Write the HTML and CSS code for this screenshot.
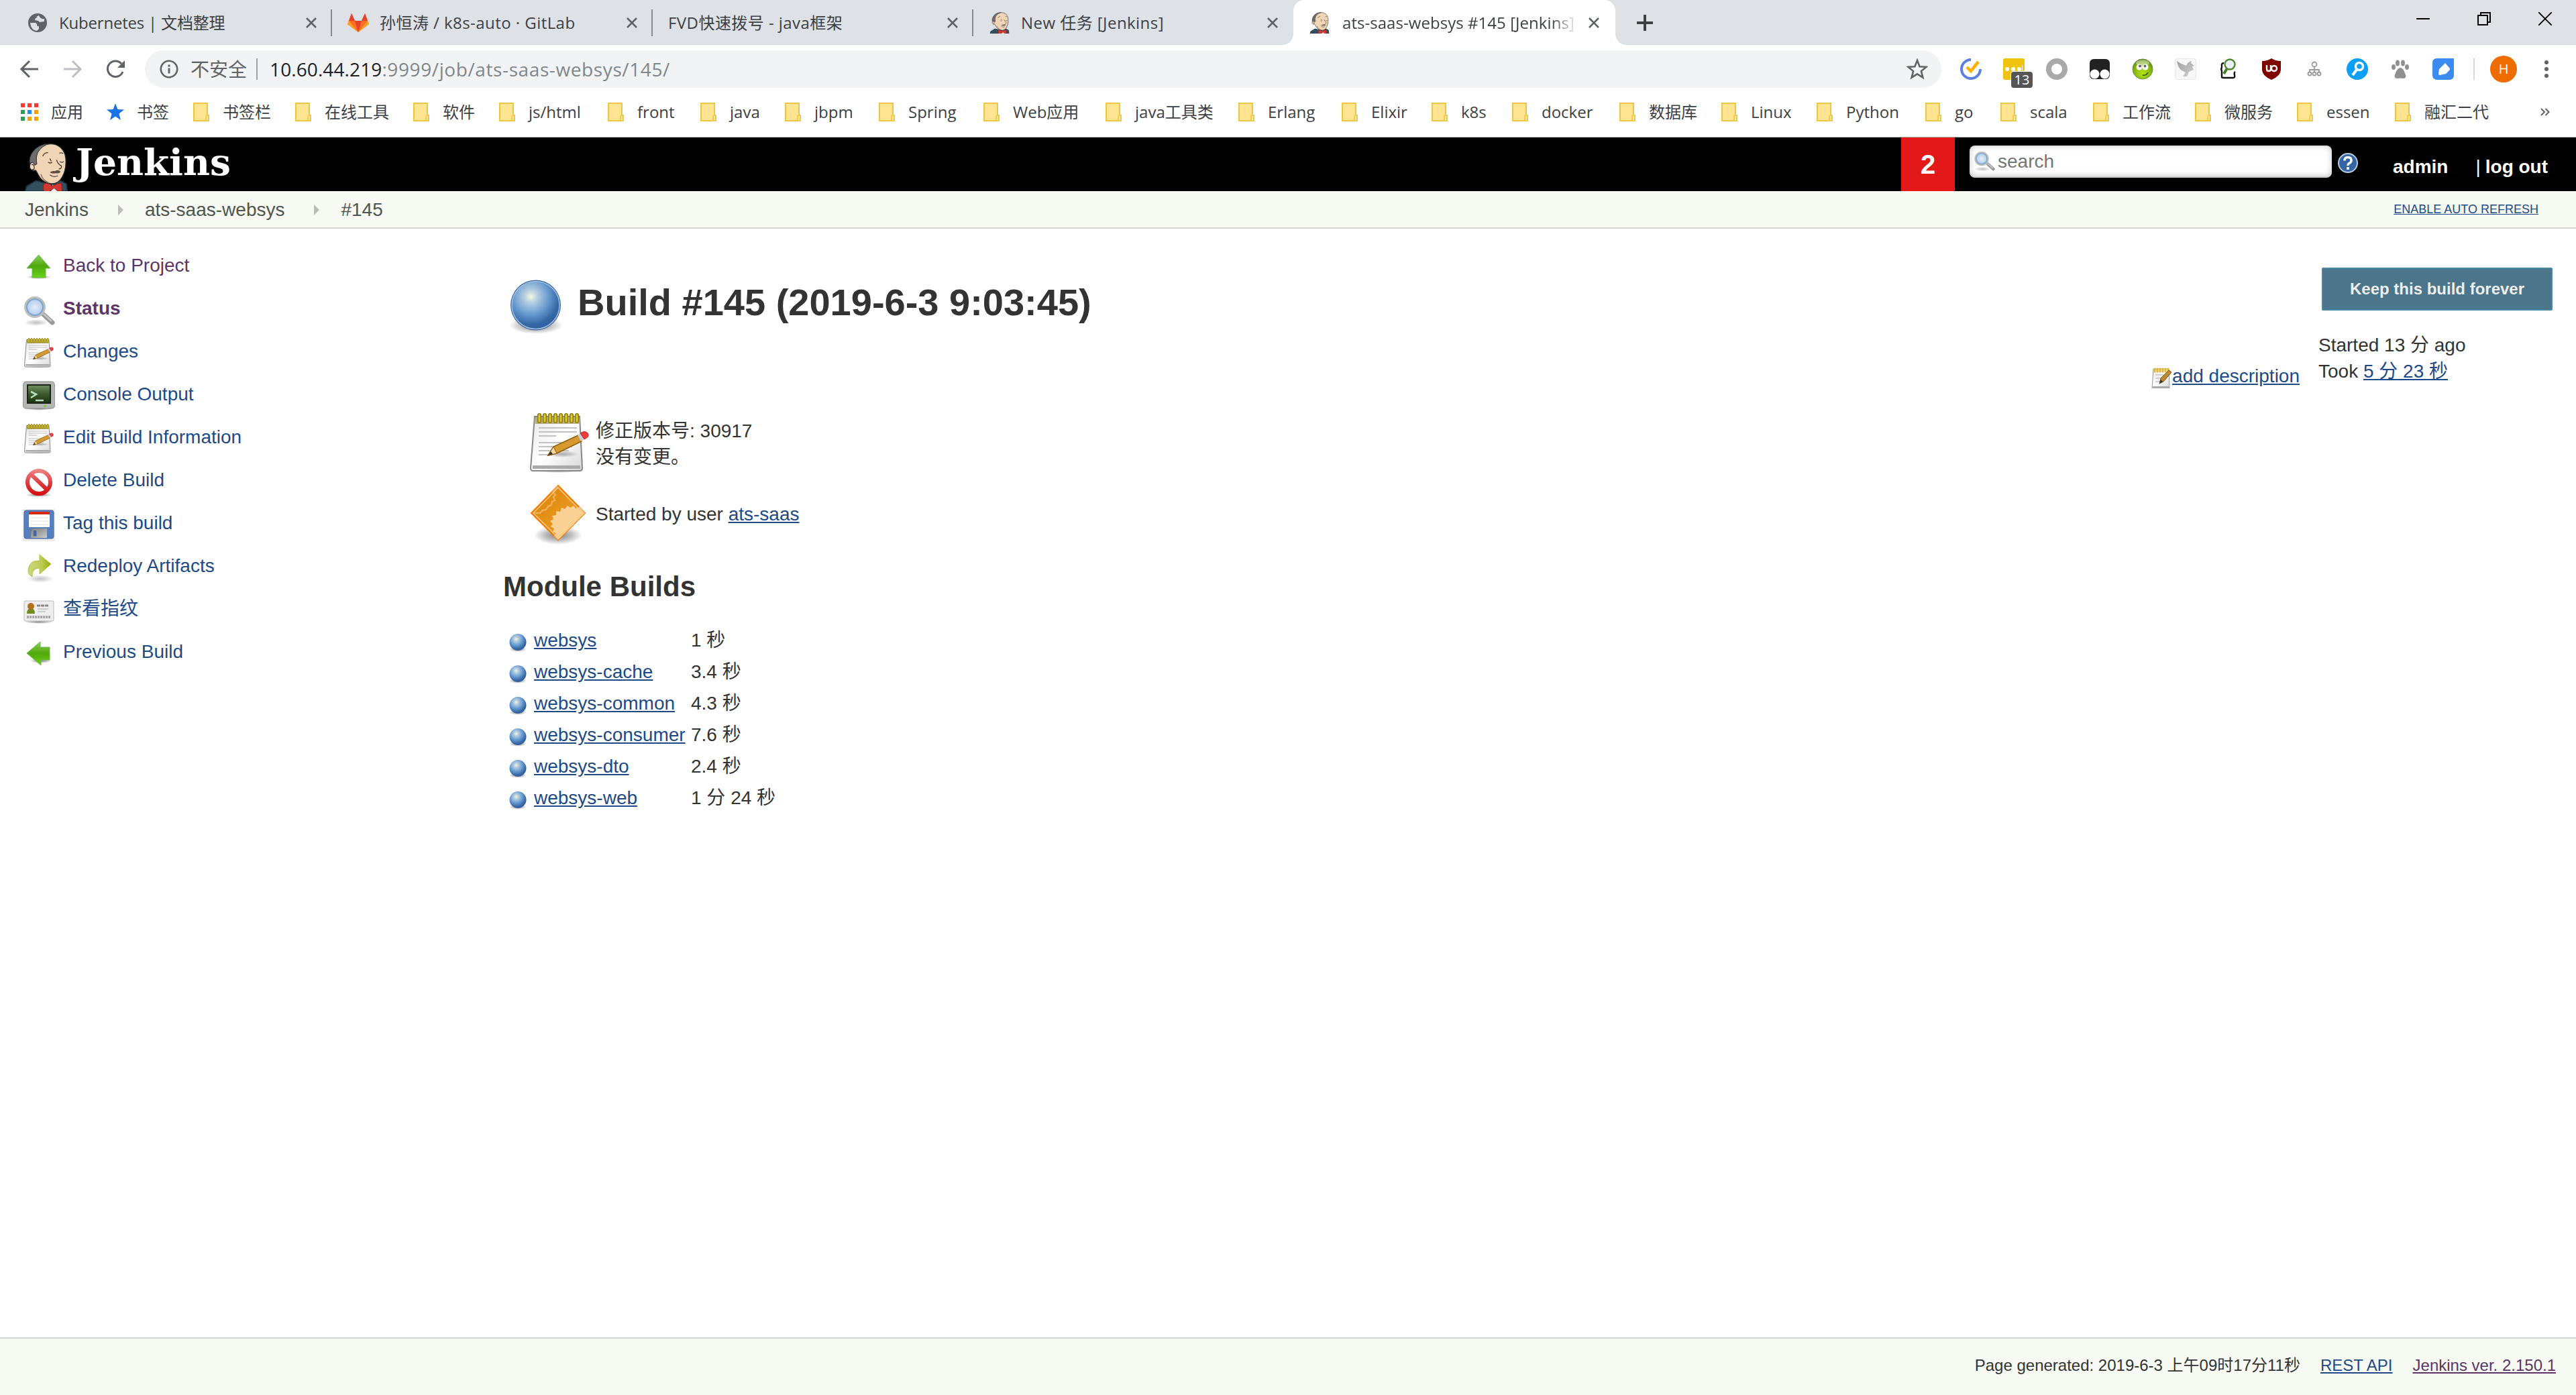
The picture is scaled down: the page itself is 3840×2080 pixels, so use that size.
FILE: index.html
```html
<!DOCTYPE html>
<html lang="zh-CN">
<head>
<meta charset="utf-8">
<title>ats-saas-websys #145 [Jenkins]</title>
<link rel="stylesheet" href="styles.css">
</head>
<body>
<svg class="sprite" width="0" height="0" aria-hidden="true">
  <defs>
    <radialGradient id="g-ball" cx=".4" cy=".32" r=".7"><stop offset="0" stop-color="#f4f5de"/><stop offset=".2" stop-color="#b4cde0"/><stop offset=".55" stop-color="#6498ce"/><stop offset=".85" stop-color="#3465a4"/><stop offset="1" stop-color="#3060a0"/></radialGradient>
    <radialGradient id="g-shadow"><stop offset="0" stop-color="#000" stop-opacity=".5"/><stop offset=".55" stop-color="#000" stop-opacity=".25"/><stop offset="1" stop-color="#000" stop-opacity="0"/></radialGradient>
    <radialGradient id="g-lens"><stop offset="0" stop-color="#e4eefb"/><stop offset="1" stop-color="#a9c8ec"/></radialGradient>
    <radialGradient id="g-smile" cx=".5" cy=".7" r=".8"><stop offset="0" stop-color="#b6e416"/><stop offset=".6" stop-color="#7db010"/><stop offset="1" stop-color="#3d6a08"/></radialGradient>
    <linearGradient id="g-green" x1="0" y1="0" x2="0" y2="1"><stop offset="0" stop-color="#8ccb5a"/><stop offset=".5" stop-color="#4fa80c"/><stop offset="1" stop-color="#6bd31a"/></linearGradient>
    <linearGradient id="g-paper" x1="0" y1="0" x2="1" y2="1"><stop offset="0" stop-color="#e6e6e6"/><stop offset=".5" stop-color="#fff"/><stop offset="1" stop-color="#d8d8d8"/></linearGradient>
    <linearGradient id="g-red" gradientUnits="userSpaceOnUse" x1="0" y1="4" x2="0" y2="44"><stop offset="0" stop-color="#ef8a8a"/><stop offset=".5" stop-color="#dc4040"/><stop offset="1" stop-color="#d50a0a"/></linearGradient>
    <linearGradient id="g-screen" x1="0" y1="0" x2="0" y2="1"><stop offset="0" stop-color="#6d8a5c"/><stop offset=".5" stop-color="#3d5a2c"/><stop offset="1" stop-color="#1d3411"/></linearGradient>
    <linearGradient id="g-orange" x1="0" y1="0" x2="1" y2="1"><stop offset="0" stop-color="#d98200"/><stop offset="1" stop-color="#f2a536"/></linearGradient>
    <linearGradient id="g-metal" x1="0" y1="0" x2="1" y2="1"><stop offset="0" stop-color="#777"/><stop offset="1" stop-color="#ccc"/></linearGradient>
    <linearGradient id="g-olive" x1="0" y1="0" x2="1" y2="0"><stop offset="0" stop-color="#ccd67e"/><stop offset=".6" stop-color="#bccb52"/><stop offset="1" stop-color="#93ac08"/></linearGradient>
    <linearGradient id="g-bird" x1="0" y1="0" x2="1" y2="1"><stop offset="0" stop-color="#a0a0a0"/><stop offset="1" stop-color="#d0d0d0"/></linearGradient>
  </defs>
  <symbol id="folder" viewBox="0 0 24 28"><path d="M1 1h20v18h2v8H1z" fill="#ffe591" stroke="#edc646" stroke-width="2"/><path d="M19 27v-6q0-2 2-2t2 2v6z" fill="#ffe591" stroke="#edc646" stroke-width="1.6"/></symbol>
  <symbol id="close" viewBox="0 0 16 16"><path d="M1 1l14 14M15 1L1 15" fill="none" stroke="#5f6368" stroke-width="2.6"/></symbol>
  <symbol id="ball" viewBox="0 0 84 84"><ellipse cx="42" cy="70" rx="40" ry="13" fill="url(#g-shadow)"/><circle cx="41.500" cy="40" r="37.500" fill="#3465a4"/><circle cx="41.500" cy="40" r="35.500" fill="url(#g-ball)" stroke="#a3bfdf" stroke-width="1.500"/></symbol>
  <symbol id="ball-s" viewBox="0 0 32 32"><ellipse cx="16" cy="27" rx="13" ry="4" fill="url(#g-shadow)"/><circle cx="16" cy="16.500" r="12.500" fill="url(#g-ball)"/></symbol>
  <symbol id="notepad" viewBox="0 0 96 96">
    <ellipse cx="46" cy="87" rx="38" ry="4" fill="url(#g-shadow)"/>
    <path d="M11 7h67l4 77q0 4-4 4H9q-4 0-4-4z" fill="url(#g-paper)" stroke="#888" stroke-width="2"/>
    <path d="M8 80h71v5H8z" fill="#aaa"/>
    <path d="M12 8h65v10H12z" fill="#8a7a1a" opacity=".55"/>
    <path d="M18 5v9M26 5v9M34 5v9M42 5v9M50 5v9M58 5v9M66 5v9M74 5v9" stroke="#8d7a00" stroke-width="6" stroke-linecap="round"/>
    <path d="M18 5v9M26 5v9M34 5v9M42 5v9M50 5v9M58 5v9M66 5v9M74 5v9" stroke="#ddc92a" stroke-width="3" stroke-linecap="round"/>
    <path d="M17 24h57M17 30h57M17 36h26M17 46h57M17 52h50M17 58h45M17 64h20" stroke="#c2c2c2" stroke-width="2.200"/>
    <ellipse cx="52" cy="63" rx="24" ry="5" fill="url(#g-shadow)" opacity=".6"/>
    <path d="M31 65l8-13 37-17 5 9-37 18z" fill="#d69a30" stroke="#8f5902" stroke-width="1.500"/>
    <path d="M31 65l8-13 5 10z" fill="#efd9a0" stroke="#8f5902"/><path d="M31 65l4-6 3 4z" fill="#333"/>
    <path d="M75 35l5 9 5-3-5-9z" fill="#ccc"/><path d="M79 32q7-5 11 0t-5 9z" fill="#ef3b3b" stroke="#a33" stroke-width="1"/>
  </symbol>
  <symbol id="notepad-s" viewBox="0 0 32 32">
    <path d="M4 3h23l1 29H2z" fill="url(#g-paper)" stroke="#999"/><path d="M3 29h25v3H2z" fill="#aaa"/>
    <path d="M7 12h16M7 17h9M7 22h7" stroke="#c4c4c4" stroke-width="1.500"/>
    <path d="M6 3v4M10 3v4M14 3v4M18 3v4M22 3v4M26 3v4" stroke="#dfb930" stroke-width="3" stroke-linecap="round"/>
    <path d="M13 25l2-8L27 5l4 3-12 14z" fill="#c08a35" stroke="#6d5018"/><path d="M13 25l2-6 3 3z" fill="#333"/>
  </symbol>
  <symbol id="magnifier" viewBox="0 0 48 48"><ellipse cx="20" cy="42" rx="18" ry="5" fill="url(#g-shadow)" opacity=".5"/><path d="M31 30l13 12" stroke="#999" stroke-width="7" stroke-linecap="round"/><path d="M31 29l12 11" stroke="#c4c4c4" stroke-width="3"/><circle cx="18" cy="19" r="14" fill="url(#g-lens)" stroke="#bdbfbb" stroke-width="4"/><circle cx="18" cy="19" r="12" fill="none" stroke="#7ba3d2" stroke-width="2"/></symbol>
  <symbol id="jenkins" viewBox="0 0 192 216">
    <path d="M2 216l6-22 42-25 40 10 70-10 26 14 4 33z" fill="#335061" stroke="#1d2f3a" stroke-width="5"/>
    <path d="M112 5C150 3 180 30 183 70q4 50-16 83-16 30-46 30-34-2-54-28l-18-32q-22 4-27-13-2-18 11-24-2-36 22-62Q80 7 112 5z" fill="#f0d6b7" stroke="#27272a" stroke-width="4"/>
    <path d="M112 3Q60 5 34 42 17 66 22 92l14-5 8 13 10-5q-6-30 4-52Q76 12 112 3z" fill="#6d6b6d" stroke="#2b2b2e" stroke-width="3"/>
    <path d="M30 98q10-4 12 10t-8 10M80 60q8-18 24-16M154 46q10-4 18 2M104 86q10 8 18 0M156 84q10 6 18 0M112 70l6 12" fill="none" stroke="#4a3b33" stroke-width="4"/>
    <path d="M142 76q4 18 22 28 0 14-12 12" fill="none" stroke="#49392f" stroke-width="4"/>
    <path d="M112 132q10-8 22-5 14-10 26 2-4 9-22 7-16 4-26-4z" fill="#5f4c42"/><path d="M112 143q18 14 36 4" fill="none" stroke="#503f36" stroke-width="4"/>
    <path d="M72 140q6 26 34 38" fill="none" stroke="#8d6a55" stroke-width="4"/>
    <path d="M118 216l6-28 18 2 8 26z" fill="#f3f3f3"/>
    <path d="M86 182q20-6 36 12l24-12 18-2 3 36h-20l-16-14-26 18-16 2q-12-20-3-40z" fill="#d33833" stroke="#85201c" stroke-width="3"/>
  </symbol>
</svg>

<header class="browser">
  <div class="tabs">
    <div class="tab first"><svg class="fav" viewBox="0 0 32 32"><circle cx="16" cy="16" r="14" fill="#5f6368"/><path d="M5 16h7q3 0 3 3t3 2v4l-3 3Q6 27 5 16zM14 7l4-2q2 6 8 5v4l-7 1-2-2-5-1 1-3 3-1z" fill="#dee1e6"/></svg><span class="tab-title">Kubernetes | 文档整理</span><svg class="x"><use href="#close"/></svg></div>
    <div class="tab"><svg class="fav" viewBox="0 0 32 32"><path d="M16 30L0 18 6 2l5 11h10L26 2l6 16z" fill="#fc6d26"/><path d="M11 13h10l-5 17z" fill="#e24329"/><path d="M6 2l5 11H2zM26 2l4 11h-9z" fill="#e24329"/><path d="M2 13l-2 5 16 12zM30 13l2 5-16 12z" fill="#fca326"/></svg><span class="tab-title">孙恒涛 / k8s-auto · GitLab</span><svg class="x"><use href="#close"/></svg></div>
    <div class="tab"><span class="tab-title">FVD快速拨号 - java框架</span><svg class="x"><use href="#close"/></svg></div>
    <div class="tab last"><svg class="fav"><use href="#jenkins"/></svg><span class="tab-title">New 任务 [Jenkins]</span><svg class="x"><use href="#close"/></svg></div>
    <div class="tab active"><svg class="fav"><use href="#jenkins"/></svg><span class="tab-title fade">ats-saas-websys #145 [Jenkins]</span><svg class="x"><use href="#close"/></svg></div>
    <svg class="plus" viewBox="0 0 24 24"><path d="M12 0v24M0 12h24" stroke="#3c4043" stroke-width="4"/></svg>
    <div class="window-buttons">
      <svg viewBox="0 0 20 20"><path d="M0 10h20" stroke="#000" stroke-width="2"/></svg>
      <svg viewBox="0 0 20 20"><path d="M1 5h14v14H1zM5 5V1h14v14h-4" fill="none" stroke="#000" stroke-width="2"/></svg>
      <svg viewBox="0 0 20 20"><path d="M0 0l20 20M20 0L0 20" stroke="#000" stroke-width="1.800"/></svg>
    </div>
  </div>

  <div class="toolbar">
    <div class="nav">
      <svg viewBox="0 0 32 32"><path d="M29 16H5M16 4L4 16l12 12" fill="none" stroke="#5f6368" stroke-width="3"/></svg>
      <svg viewBox="0 0 32 32"><path d="M3 16h24M16 4l12 12-12 12" fill="none" stroke="#bdbfc2" stroke-width="3"/></svg>
      <svg viewBox="0 0 32 32"><path d="M25 8A11.700 11.700 0 1 0 27 20" fill="none" stroke="#5f6368" stroke-width="3"/><path d="M30 3v11H19z" fill="#5f6368"/></svg>
    </div>
    <div class="omnibox">
      <svg class="info" viewBox="0 0 28 28"><circle cx="14" cy="14" r="12.200" fill="none" stroke="#5f6368" stroke-width="2.600"/><path d="M14 12.500v8M14 7.500v3" stroke="#5f6368" stroke-width="3"/></svg>
      <span class="insecure">不安全</span>
      <span class="url"><b>10.60.44.219</b>:9999/job/ats-saas-websys/145/</span>
      <svg class="star" viewBox="0 0 32 32"><path d="M16 3l3.600 9.200 9.900.6-7.600 6.300 2.500 9.600L16 23.400l-8.400 5.300 2.500-9.600-7.600-6.300 9.900-.6z" fill="none" stroke="#5f6368" stroke-width="2.600"/></svg>
    </div>
    <div class="extensions">
      <svg viewBox="0 0 32 32"><path d="M16 2a14 14 0 1 0 14 14" fill="none" stroke="#5b7fe3" stroke-width="4"/><path d="M10 13l6 6L27 5" fill="none" stroke="#ffb000" stroke-width="4.500"/></svg>
      <div class="ext-badge"><svg viewBox="0 0 32 32"><rect width="32" height="32" rx="3" fill="#f0c30f"/><g fill="#fff"><circle cx="6" cy="16" r="3"/><circle cx="15" cy="16" r="3"/><circle cx="24" cy="16" r="3"/><path d="M28 10h1v10h-1z"/></g></svg><span>13</span></div>
      <svg viewBox="0 0 32 32"><circle cx="16" cy="16" r="12" fill="none" stroke="#a9a9a9" stroke-width="8"/></svg>
      <svg viewBox="0 0 32 32"><rect x="1" y="1" width="30" height="30" rx="6" fill="#222"/><circle cx="8.500" cy="23.500" r="7" fill="#fff"/><circle cx="23.500" cy="23.500" r="7" fill="#fff"/></svg>
      <svg viewBox="0 0 32 32"><circle cx="16" cy="16" r="15" fill="url(#g-smile)" stroke="#6f8f4a"/><ellipse cx="16" cy="7" rx="10" ry="4.500" fill="#fff" opacity=".45"/><circle cx="11" cy="13" r="4.500" fill="#fff"/><circle cx="20" cy="13" r="4.500" fill="#fff"/><circle cx="12" cy="11.500" r="2" fill="#666"/><circle cx="19.500" cy="11.500" r="2" fill="#666"/><path d="M16 25q6 1 8-4" fill="none" stroke="#33500a" stroke-width="1.500"/></svg>
      <svg viewBox="0 0 32 32"><rect x=".5" y=".5" width="31" height="31" rx="3" fill="#f7f7f7" stroke="#e8e8e8"/><path d="M3 4q7 5 14 7 2-6 8-7l-1 3 5 4-3 1 2 5-7 3-3 7-6 0 4-6-6-3q-5-3-7-14z" fill="url(#g-bird)"/></svg>
      <svg viewBox="0 0 32 32"><path d="M9 7Q5 7 6 12q0 4-2 4 2 0 2 4v8q0 1 3 1h14q3 0 2-4t1-5" fill="none" stroke="#111" stroke-width="2.400"/><path d="M14 15l-5 8" stroke="#3d7f1d" stroke-width="4"/><circle cx="18" cy="9" r="7.500" fill="#e9eff8" stroke="#4f8a2a" stroke-width="2.400"/></svg>
      <svg viewBox="0 0 32 32"><path d="M16 0q6 4 14 4v13q0 9-14 15Q2 26 2 17V4q8 0 14-4z" fill="#800000"/><path d="M9 10v6q0 3 3 3t3-3v-6" fill="none" stroke="#fff" stroke-width="2.400"/><circle cx="20" cy="15" r="4" fill="none" stroke="#fff" stroke-width="2.400"/></svg>
      <svg viewBox="0 0 32 32"><g fill="none" stroke="#9a9a9a" stroke-width="1.800"><circle cx="16" cy="9" r="3.500"/><path d="M16 12v9M9 21v-4h14v4"/><circle cx="9" cy="23" r="2.500"/><circle cx="16" cy="23" r="2.500"/><circle cx="23" cy="23" r="2.500"/></g></svg>
      <svg viewBox="0 0 32 32"><circle cx="16" cy="16" r="16" fill="#0aa0f7"/><circle cx="19" cy="12" r="5.500" fill="none" stroke="#fff" stroke-width="3.500"/><path d="M15 17l-6 8" stroke="#fff" stroke-width="4"/></svg>
      <svg viewBox="0 0 32 32"><g fill="#909090"><ellipse cx="6" cy="13" rx="3" ry="4"/><ellipse cx="12" cy="7" rx="3" ry="4.500"/><ellipse cx="20" cy="7" rx="3" ry="4.500"/><ellipse cx="26" cy="13" rx="3" ry="4"/><path d="M16 14q4 0 7 8 4 8-3 8-4-1-8 0-7 0-3-8 3-8 7-8z"/></g></svg>
      <svg viewBox="0 0 32 32"><path d="M7 0h25v25q0 7-7 7H7q-7 0-7-7V7q0-7 7-7z" fill="#3b8bf0"/><path d="M19 7l6 7q2 2 0 4l-5 5-9 2q-2 0-2-2l1-7z" fill="#fff"/></svg>
    </div>
    <div class="profile"><span class="avatar">H</span><svg viewBox="0 0 8 28"><g fill="#5f6368"><circle cx="4" cy="4" r="3"/><circle cx="4" cy="14" r="3"/><circle cx="4" cy="24" r="3"/></g></svg></div>
  </div>

  <nav class="bookmarks">
    <a><svg viewBox="0 0 26 26"><path d="M0 0h6v6H0zM10 0h6v6h-6zM20 0h6v6h-6z" fill="#f93a2f"/><path d="M0 10h6v6H0zM0 20h6v6H0z" fill="#2f9e55"/><path d="M10 10h6v6h-6z" fill="#2288f5"/><path d="M20 10h6v6h-6zM10 20h6v6h-6zM20 20h6v6h-6z" fill="#f3a200"/></svg>应用</a>
    <a><svg viewBox="0 0 26 26"><path d="M13 0l3.300 9 9.700.4-7.600 6 2.600 9.600-8-5.400L5 25l2.600-9.600L0 9.400 9.700 9z" fill="#1a73e8"/></svg>书签</a>
    <a><svg><use href="#folder"/></svg>书签栏</a>
    <a><svg><use href="#folder"/></svg>在线工具</a>
    <a><svg><use href="#folder"/></svg>软件</a>
    <a><svg><use href="#folder"/></svg>js/html</a>
    <a><svg><use href="#folder"/></svg>front</a>
    <a><svg><use href="#folder"/></svg>java</a>
    <a><svg><use href="#folder"/></svg>jbpm</a>
    <a><svg><use href="#folder"/></svg>Spring</a>
    <a><svg><use href="#folder"/></svg>Web应用</a>
    <a><svg><use href="#folder"/></svg>java工具类</a>
    <a><svg><use href="#folder"/></svg>Erlang</a>
    <a><svg><use href="#folder"/></svg>Elixir</a>
    <a><svg><use href="#folder"/></svg>k8s</a>
    <a><svg><use href="#folder"/></svg>docker</a>
    <a><svg><use href="#folder"/></svg>数据库</a>
    <a><svg><use href="#folder"/></svg>Linux</a>
    <a><svg><use href="#folder"/></svg>Python</a>
    <a><svg><use href="#folder"/></svg>go</a>
    <a><svg><use href="#folder"/></svg>scala</a>
    <a><svg><use href="#folder"/></svg>工作流</a>
    <a><svg><use href="#folder"/></svg>微服务</a>
    <a><svg><use href="#folder"/></svg>essen</a>
    <a><svg><use href="#folder"/></svg>融汇二代</a>
    <svg class="more" viewBox="0 0 14 12"><path d="M1 1l5 5-5 5M7.500 1l5 5-5 5" fill="none" stroke="#5f6368" stroke-width="2"/></svg>
  </nav>
</header>

<div class="app-header">
  <a class="logo"><svg><use href="#jenkins"/></svg><span>Jenkins</span></a>
  <div class="app-tools">
    <span class="alerts">2</span>
    <div class="search"><svg><use href="#magnifier"/></svg><span>search</span></div>
    <svg class="help" viewBox="0 0 32 32"><circle cx="16" cy="16" r="14" fill="#3465a4" stroke="#b9cce4" stroke-width="2"/><path d="M11 12.500q0-5 5-5t5 4.500q0 3-3 4.500-2 1-2 3.500M16 22v4" fill="none" stroke="#fff" stroke-width="3.500"/></svg>
    <a class="user">admin</a><a class="logout"><i>|</i>log out</a>
  </div>
</div>

<div class="crumbs">
  <a>Jenkins</a><i></i><a>ats-saas-websys</a><i></i><a>#145</a>
  <a class="refresh">ENABLE AUTO REFRESH</a>
</div>

<div class="page">
  <ul class="tasks">
    <li class="visited"><svg viewBox="0 0 48 48"><ellipse cx="24" cy="38" rx="18" ry="3" fill="url(#g-shadow)"/><path d="M23.500 5L41 25h-7v14H14V25H6z" fill="url(#g-green)" stroke="#72b84a"/></svg><a>Back to Project</a></li>
    <li class="visited current"><svg><use href="#magnifier"/></svg><a>Status</a></li>
    <li><svg><use href="#notepad"/></svg><a>Changes</a></li>
    <li><svg viewBox="0 0 48 48"><ellipse cx="24" cy="42" rx="22" ry="3" fill="url(#g-shadow)"/><path d="M4 2h40q3 0 4 8v26q0 6-5 6H5q-5 0-5-6V10q1-8 4-8z" fill="#b4b6b1" stroke="#888a85"/><rect x="6" y="6" width="36" height="29" fill="#1c2417"/><rect x="8" y="8" width="32" height="25" fill="url(#g-screen)"/><path d="M12 17l8 4-8 5M19 30h12" fill="none" stroke="#b5dfc4" stroke-width="2.600"/><circle cx="33" cy="38.500" r="1.500" fill="#73d216"/></svg><a>Console Output</a></li>
    <li><svg><use href="#notepad"/></svg><a>Edit Build Information</a></li>
    <li><svg viewBox="0 0 48 48"><ellipse cx="24" cy="43" rx="20" ry="3" fill="url(#g-shadow)"/><path d="M12 12l24 23" stroke="url(#g-red)" stroke-width="6"/><circle cx="24" cy="24" r="17" fill="none" stroke="url(#g-red)" stroke-width="6"/></svg><a>Delete Build</a></li>
    <li><svg viewBox="0 0 48 48"><path d="M0 0h48v48H0z" fill="#ececec"/><rect x="2" y="2" width="44" height="42" rx="3" fill="#5580c0" stroke="#45659c"/><path d="M9 4h31v23H9z" fill="#fff"/><path d="M9 4h31v4H9z" fill="#dc2a10"/><path d="M11 13h27M11 18h27M11 23h27" stroke="#e4e4e4"/><path d="M12 29h24v14H12z" fill="url(#g-metal)"/><path d="M15 31h6v10h-6z" fill="#45659c" stroke="#aaa"/></svg><a>Tag this build</a></li>
    <li><svg viewBox="0 0 48 48"><ellipse cx="26" cy="40" rx="20" ry="6" fill="url(#g-shadow)" opacity=".45"/><path d="M25 4l17 14-17 15V24q-12 0-11 13Q8 34 8 28 9 12 25 13z" fill="url(#g-olive)" stroke="#b4c440" stroke-width="1"/></svg><a>Redeploy Artifacts</a></li>
    <li><svg viewBox="0 0 48 48"><ellipse cx="24" cy="40" rx="22" ry="3" fill="url(#g-shadow)"/><rect x="2" y="9" width="44" height="30" rx="2" fill="#eee" stroke="#bbb"/><path d="M6 28q0-8 6-8t6 8z" fill="#6f8c25"/><circle cx="12" cy="17" r="5" fill="#b5701d"/><path d="M21 16h17" stroke="#888" stroke-width="3" stroke-dasharray="5 1"/><path d="M22 21h16M22 25h12" stroke="#ccc" stroke-width="2"/><path d="M6 33h36" stroke="#aaa" stroke-width="4" stroke-dasharray="3 1"/></svg><a>查看指纹</a></li>
    <li><svg viewBox="0 0 48 48"><ellipse cx="27" cy="34" rx="16" ry="4" fill="url(#g-shadow)"/><path d="M6 23L26 6v8h14v19H27v8z" fill="url(#g-green)" stroke="#72b84a"/></svg><a>Previous Build</a></li>
  </ul>

  <main class="build">
    <div class="title"><svg><use href="#ball"/></svg><h1>Build #145 (2019-6-3 9:03:45)</h1></div>
    <div class="summary">
      <div class="entry"><svg><use href="#notepad"/></svg><p>修正版本号: 30917<br>没有变更。</p></div>
      <div class="entry"><svg viewBox="0 0 96 96"><ellipse cx="46" cy="80" rx="36" ry="14" fill="url(#g-shadow)"/><path d="M46 6l40 41-40 40L6 47z" fill="url(#g-orange)" stroke="#f57900" stroke-width="2"/><path d="M46 7q-6 6-8 9l4 4-3 3 2 5-4 2-1 5-5 2-3 5-5 1-4 4-8 0" fill="none" stroke="#f0ae55" stroke-width="2.500"/><path d="M86 47L46 87l-6-6 3-4-5-2 2-5-5-3 3-4-4-4 5-3-2-5 6-1 0-6 6 1 2-6 5 2 4-5 4 3 5-3 3 4 6-2z" fill="#fbd195"/><path d="M46 9l37 38-37 37L9 47z" fill="none" stroke="#fcc885" stroke-width="1.500"/></svg><p>Started by user <a>ats-saas</a></p></div>
    </div>
    <h2>Module Builds</h2>
    <div class="modules">
      <svg><use href="#ball-s"/></svg><span><a>websys</a></span><span>1 秒</span>
      <svg><use href="#ball-s"/></svg><span><a>websys-cache</a></span><span>3.4 秒</span>
      <svg><use href="#ball-s"/></svg><span><a>websys-common</a></span><span>4.3 秒</span>
      <svg><use href="#ball-s"/></svg><span><a>websys-consumer</a></span><span>7.6 秒</span>
      <svg><use href="#ball-s"/></svg><span><a>websys-dto</a></span><span>2.4 秒</span>
      <svg><use href="#ball-s"/></svg><span><a>websys-web</a></span><span>1 分 24 秒</span>
    </div>
  </main>

  <div class="describe"><svg><use href="#notepad-s"/></svg><a>add description</a></div>
  <aside class="meta">
    <button>Keep this build forever</button>
    <p>Started 13 分 ago<br>Took <a>5 分 23 秒</a></p>
  </aside>
</div>

<footer><span>Page generated: 2019-6-3 上午09时17分11秒</span><a>REST API</a><a class="visited">Jenkins ver. 2.150.1</a></footer>
</body>
</html>
```
FILE: styles.css
```css
* { box-sizing: border-box; }
html, body { height: 100%; margin: 0; }
body {
  display: flex;
  flex-direction: column;
  background: #fff;
  color: #333;
  font: 28px/39px "Liberation Sans", "Noto Sans CJK SC", sans-serif;
  overflow: hidden;
  white-space: nowrap;
}
svg { display: block; flex: none; }
p, h1, h2, ul { margin: 0; padding: 0; }
.sprite { position: absolute; }

/* Browser window */
.browser {
  flex: none;
  height: 205px;
  border-bottom: 1px solid #b0b0b0;
  font: 24px/32px "Open Sans", "Noto Sans CJK SC", sans-serif;
  color: #3c4043;
}
.tabs {
  display: flex;
  align-items: center;
  height: 67px;
  padding-left: 17px;
  background: #dee1e6;
}
.tab {
  display: flex;
  align-items: center;
  flex: none;
  width: 478px;
  height: 67px;
  padding: 0 23px;
  background: linear-gradient(#868b90, #868b90) right 14px / 2px 40px no-repeat;
}
.tab .fav { width: 32px; height: 32px; margin-right: 16px; }
.tab-title { flex: 1; overflow: hidden; letter-spacing: .45px; }
.first .tab-title { letter-spacing: -.2px; }
.tab .x { width: 16px; height: 16px; margin-left: 20px; }
.tab.last { background: none; width: 477px; }
.tab.active {
  position: relative;
  width: 480px;
  background: #fff;
  border-radius: 16px 16px 0 0;
  padding-right: 24px;
}
.tab.active .fav { margin-right: 18px; }
.tab.active::before, .tab.active::after {
  content: "";
  position: absolute;
  bottom: 0;
  width: 16px;
  height: 16px;
}
.tab.active::before { left: -16px; background: radial-gradient(circle at 0 0, transparent 15.5px, #fff 16px); }
.tab.active::after { right: -16px; background: radial-gradient(circle at 100% 0, transparent 15.5px, #fff 16px); }
.tab .fade {
  letter-spacing: .05px;
  -webkit-mask-image: linear-gradient(90deg, #000 calc(100% - 40px), transparent);
  mask-image: linear-gradient(90deg, #000 calc(100% - 40px), transparent);
}
.tab.active .x { margin-left: 16px; }
.plus { width: 24px; height: 24px; margin-left: 32px; }
.window-buttons { display: flex; gap: 71px; margin: -11px 36px 0 auto; }
.window-buttons svg { width: 20px; height: 20px; }

.toolbar { display: flex; align-items: center; height: 72px; }
.nav { display: flex; gap: 32px; padding: 0 29px 0 28px; }
.nav svg { width: 32px; height: 32px; }
.omnibox {
  display: flex;
  align-items: center;
  width: 2678px;
  height: 56px;
  margin-left: -1px;
  padding: 0 20px 0 22px;
  border-radius: 28px;
  background: #f1f3f4;
  color: #80868b;
  font-size: 28px;
}
.info { width: 28px; height: 28px; }
.insecure { margin-left: 18px; padding-right: 14px; border-right: 2px solid #9aa0a6; color: #5f6368; }
.url { margin-left: 18px; letter-spacing: .6px; }
.url b { font-weight: 400; color: #202124; letter-spacing: .1px; }
.star { width: 32px; height: 32px; margin-left: auto; }
.extensions { display: flex; gap: 32px; margin-left: 28px; padding-right: 29px; border-right: 2px solid #d5d7da; }
.extensions svg { width: 32px; height: 32px; }
.ext-badge { position: relative; }
.ext-badge span {
  position: absolute;
  left: 12px;
  top: 20px;
  width: 32px;
  height: 24px;
  border-radius: 4px;
  background: #555;
  box-shadow: 0 0 0 1px #fff;
  color: #fff;
  font-size: 20px;
  line-height: 23px;
  text-align: center;
}
.profile { display: flex; align-items: center; margin-left: 23px; }
.profile svg { width: 8px; height: 28px; margin-left: 40px; }
.avatar { width: 40px; height: 40px; border-radius: 50%; background: #ef6c00; color: #fff; font-size: 20px; line-height: 40px; text-align: center; }

.bookmarks {
  display: grid;
  grid-template-columns: 128px 129px 152px 176px 128px 162px 138px 126px 140px 156px 182px 198px 154px 134px 120px 160px 152px 142px 162px 112px 138px 152px 152px 146px 217px auto;
  align-items: center;
  height: 56px;
  padding-left: 31px;
}
.bookmarks a { display: flex; align-items: center; }
.bookmarks a svg { width: 24px; height: 28px; margin-right: 20px; }
.bookmarks a:nth-child(-n+2) svg { width: 26px; height: 26px; margin-right: 19px; }
.bookmarks .more { width: 14px; height: 12px; }

/* Jenkins header */
.app-header { display: flex; flex: none; height: 80px; background: #000; color: #fff; font-weight: 700; }
.logo { display: flex; padding: 8px 0 0 37px; }
.logo svg { width: 64px; height: 72px; }
.logo span { margin-left: 12px; font: 700 55px/64px "DejaVu Serif", serif; margin-top: -3px; }
.app-tools { display: flex; margin-left: auto; width: 1006px; }
.alerts { width: 80px; background: #e31818; font-size: 40px; line-height: 80px; text-align: center; }
.search {
  display: flex;
  align-items: center;
  width: 540px;
  height: 48px;
  margin: 12px 0 0 22px;
  padding-left: 6px;
  border-radius: 8px;
  border-bottom: 2px solid #ccc;
  background: #fff;
  box-shadow: inset 0 0 10px rgba(0, 0, 0, .25);
  color: #757575;
  font-weight: 400;
}
.search svg { width: 32px; height: 32px; margin-right: 4px; }
.help { width: 32px; height: 32px; margin: 22px 0 0 8px; }
.user { margin: 24px 0 0 51px; }
.logout { margin: 24px 0 0 41px; }
.logout i { font-style: normal; font-weight: 400; margin-right: 7px; }

.crumbs { display: flex; flex: none; height: 56px; padding: 8px 56px 0 37px; background: #f6faf2; border-bottom: 2px solid #d3d7cf; color: #4f5550; }
.crumbs i { width: 0; height: 0; margin: 12px 32px 0 44px; border-left: 8px solid #babdb6; border-top: 8px solid transparent; border-bottom: 8px solid transparent; }
.crumbs .refresh { margin-left: auto; color: #204a87; font-size: 18px; text-decoration: underline; }

/* Build page */
.page { display: flex; flex: 1; }
.page a, footer a { color: #204a87; text-decoration: underline; }
.tasks { width: 750px; padding: 26px 0 0 34px; list-style: none; }
.tasks li { display: flex; align-items: center; height: 64px; }
.tasks svg { width: 48px; height: 48px; margin-right: 12px; }
.tasks a { text-decoration: none; padding-bottom: 7px; }
.tasks .visited a, footer .visited { color: #5c3566; }
.tasks .current a { font-weight: 700; }

.build { flex: 1; }
.title { display: flex; padding: 74px 0 0 7px; }
.title svg { width: 84px; height: 84px; }
h1 { margin: 4px 0 0 20px; font-size: 56px; line-height: 64px; }
.summary { display: flex; flex-direction: column; gap: 8px; padding: 115px 0 0 36px; }
.entry { display: flex; align-items: center; height: 96px; }
.entry svg { width: 96px; height: 96px; margin-right: 6px; }
h2 { margin-top: 37px; font-size: 42px; line-height: 48px; }
.modules { display: grid; grid-template-columns: 46px 234px auto; justify-content: start; align-items: center; grid-auto-rows: 47px; margin-top: 32px; }
.modules svg { width: 32px; height: 32px; margin: 4px 0 0 6px; }

.describe { display: flex; align-items: center; height: 40px; margin: 199px -1px 0 0; }
.describe svg { width: 32px; height: 32px; margin-top: 6px; }
.meta { width: 413px; padding: 58px 34px 0 29px; }
.meta button {
  display: block;
  width: 344px;
  height: 64px;
  margin-left: 5px;
  padding: 0;
  border: 2px solid #4b87a0;
  border-radius: 2px;
  background: #4b758b;
  color: #eee;
  font: 700 24px "Liberation Sans", sans-serif;
}
.meta p { margin-top: 32px; }

footer { display: flex; flex: none; gap: 30px; justify-content: flex-end; height: 86px; padding: 20px 30px 0 0; background: #f6faf2; border-top: 2px solid #d3d7cf; font-size: 24px; line-height: 40px; }
```
